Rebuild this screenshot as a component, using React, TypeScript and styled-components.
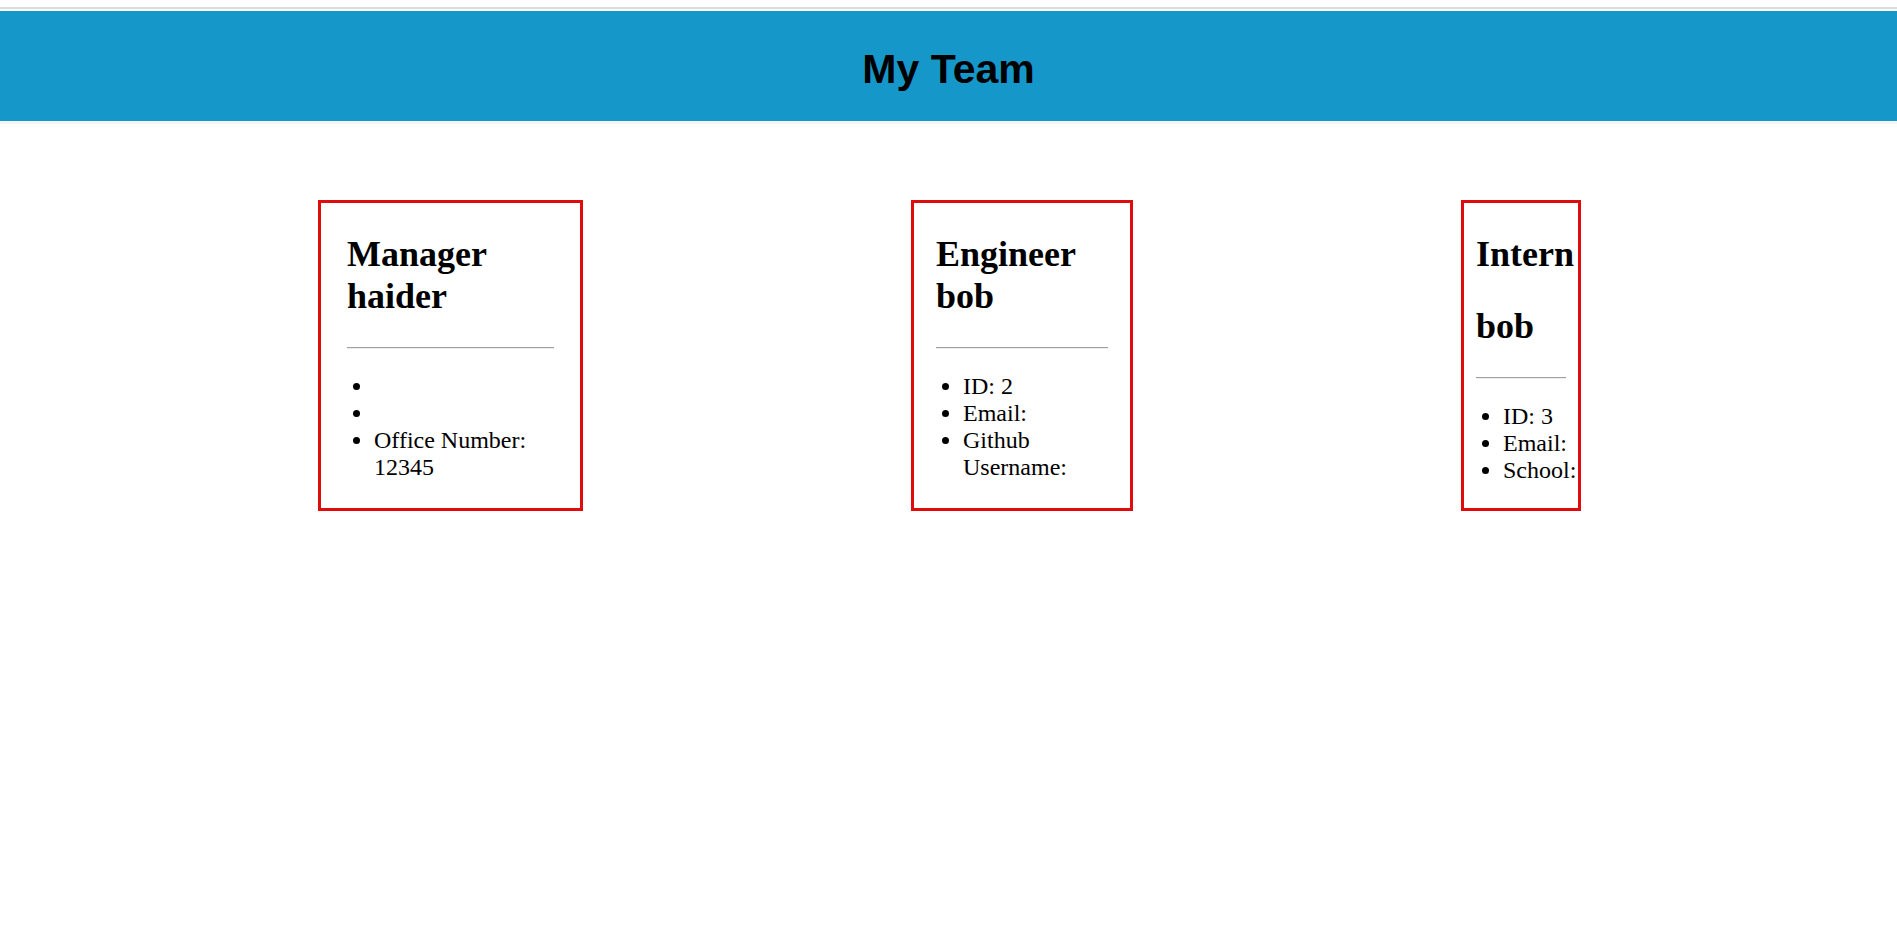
import React from "react";
import styled, { createGlobalStyle } from "styled-components";

const GlobalStyle = createGlobalStyle`
  html, body {
    margin: 0;
    padding: 0;
    background: #ffffff;
  }
  body {
    font-family: "Liberation Serif", "Times New Roman", serif;
    font-size: 24px;
    color: #000000;
  }
`;

const Page = styled.div`
  display: flex;
  flex-direction: column;
  padding-top: 7px;
`;

const TopRule = styled.div`
  height: 2px;
  background: #dcdcdc;
  margin-bottom: 2px;
`;

const Header = styled.header`
  background: #1697c9;
  padding: 35px 0 28px;
  text-align: center;
  border-bottom: 3px solid #f6f6f7;
`;

const Title = styled.h1`
  margin: 0;
  font-family: "Comic Sans MS", "Liberation Sans", Arial, sans-serif;
  font-size: 41px;
  font-weight: 700;
  line-height: normal;
  color: #000000;
`;

const CardRow = styled.main`
  display: flex;
  align-items: stretch;
  gap: 328px;
  padding-left: 318px;
  margin-top: 76px;
`;

const Card = styled.section<{ $width: number; $pad: number }>`
  box-sizing: border-box;
  width: ${(p) => p.$width}px;
  flex: none;
  border: 3px solid #e00c0c;
  padding: 0 ${(p) => p.$pad}px;
`;

const Name = styled.h2`
  font-size: 36px;
  font-weight: 700;
  line-height: normal;
  margin: 30px 0;
`;

const Divider = styled.hr`
  margin: 12px 0;
  border: none;
  border-top: 1px solid #a0a0a0;
  border-bottom: 1px solid #eeeeee;
  height: 0;
`;

const Details = styled.ul`
  margin: 24px 0;
  padding-left: 27px;
  list-style: disc;
  line-height: normal;
`;

const Item = styled.li`
  &:empty::before {
    content: "\\200B";
  }
`;

export default function App() {
  return (
    <>
      <GlobalStyle />
      <Page>
        <TopRule />
        <Header>
          <Title>My Team</Title>
        </Header>
        <CardRow>
          <Card $width={265} $pad={26}>
            <Name>Manager haider</Name>
            <Divider />
            <Details>
              <Item></Item>
              <Item></Item>
              <Item>Office Number: 12345</Item>
            </Details>
          </Card>
          <Card $width={222} $pad={22}>
            <Name>Engineer bob</Name>
            <Divider />
            <Details>
              <Item>ID: 2</Item>
              <Item>Email: </Item>
              <Item>Github Username: </Item>
            </Details>
          </Card>
          <Card $width={120} $pad={12}>
            <Name>Intern</Name>
            <Name>bob</Name>
            <Divider />
            <Details>
              <Item>ID: 3</Item>
              <Item>Email: </Item>
              <Item>School: </Item>
            </Details>
          </Card>
        </CardRow>
      </Page>
    </>
  );
}
